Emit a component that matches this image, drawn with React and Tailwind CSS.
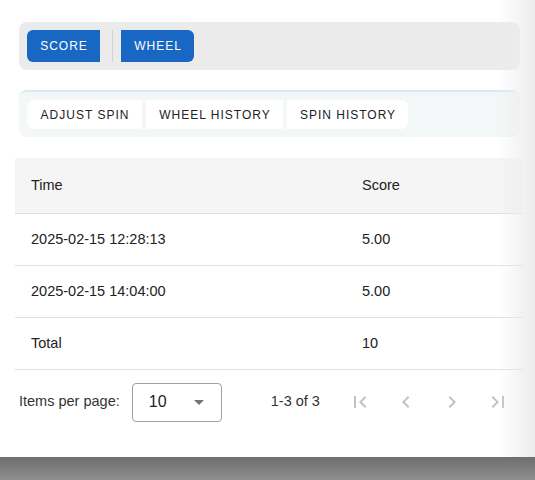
export default function App() {
  const font = "font-['Liberation_Sans',Arial,sans-serif]";
  const icon = "w-[24px] h-[24px] fill-[#c2c2c2]";
  return (
    <div className={`relative w-[535px] h-[480px] overflow-hidden flex flex-col bg-white ${font}`}>
      <div className="relative h-[457px] shrink-0 bg-white pt-[22px]">
        {/* top toggle bar */}
        <div className="ml-[19px] w-[501px] h-[48px] rounded-[8px] bg-[#ebebeb] pl-[8px] pt-[8px] flex items-start">
          <button className="h-[32px] w-[73px] rounded-l-[6px] bg-[#1867c3] text-white text-[12px] tracking-[1px] font-medium flex items-center justify-center pl-[1px]">
            SCORE
          </button>
          <div className="ml-[12px] h-[32px] w-px bg-[#d4d4d4]" />
          <button className="ml-[8px] h-[32px] w-[73px] rounded-r-[6px] bg-[#1867c3] text-white text-[12px] tracking-[1px] font-medium flex items-center justify-center pl-[1px]">
            WHEEL
          </button>
        </div>

        {/* sub tabs */}
        <div className="mt-[20px] ml-[19px] w-[501px] h-[47px] rounded-[8px] bg-[#f4f7f7] border-t-2 border-[#dde9f2] pl-[8px] pt-[8px] flex items-start gap-[4px]">
          <button className="h-[29px] w-[115px] rounded-l-[7px] bg-white text-[#222] text-[12px] tracking-[1px] flex items-center justify-center pl-[1px]">
            ADJUST SPIN
          </button>
          <button className="h-[29px] w-[137px] bg-white text-[#222] text-[12px] tracking-[1px] flex items-center justify-center pl-[1px]">
            WHEEL HISTORY
          </button>
          <button className="h-[29px] w-[121px] rounded-r-[7px] bg-white text-[#222] text-[12px] tracking-[1px] flex items-center justify-center pl-[1px]">
            SPIN HISTORY
          </button>
        </div>

        {/* table */}
        <div className="mt-[21px] ml-[15px] w-[508px] text-[14.5px] text-[#222]">
          <div className="flex h-[56px] items-center bg-[#f5f5f5] border-b border-[#e0e0e0]">
            <div className="w-[331px] pl-[16px]">Time</div>
            <div className="pl-[16px]">Score</div>
          </div>
          {[
            ["2025-02-15 12:28:13", "5.00"],
            ["2025-02-15 14:04:00", "5.00"],
            ["Total", "10"],
          ].map(([t, s]) => (
            <div key={t} className="flex h-[52px] items-center border-b border-[#e0e0e0]">
              <div className="w-[331px] pl-[16px]">{t}</div>
              <div className="pl-[16px]">{s}</div>
            </div>
          ))}
        </div>

        {/* paginator */}
        <div className="flex items-center h-[64px] pl-[19px] text-[14.5px] text-[#333]">
          <span>Items per page:</span>
          <div className="ml-[12px] w-[90px] h-[39px] rounded-[4px] border border-[#a0a0a0] flex items-center pl-[16px] pr-[17px] justify-between">
            <span className="text-[16px] text-[#222]">10</span>
            <svg viewBox="0 0 10 5" className="w-[10px] h-[5px] fill-[#757575]">
              <path d="M0 0l5 5 5-5z" />
            </svg>
          </div>
          <span className="ml-[49px]">1-3 of 3</span>
          <div className="ml-[20px] flex gap-[6px]">
            <div className="w-[40px] h-[40px] flex items-center justify-center">
              <svg viewBox="0 0 24 24" className={icon}>
                <path d="M18.41 16.59L13.82 12l4.59-4.59L17 6l-6 6 6 6zM6 6h2v12H6z" />
              </svg>
            </div>
            <div className="w-[40px] h-[40px] flex items-center justify-center">
              <svg viewBox="0 0 24 24" className={icon}>
                <path d="M15.41 7.41L14 6l-6 6 6 6 1.41-1.41L10.83 12z" />
              </svg>
            </div>
            <div className="w-[40px] h-[40px] flex items-center justify-center">
              <svg viewBox="0 0 24 24" className={icon}>
                <path d="M10 6L8.59 7.41 13.17 12l-4.58 4.59L10 18l6-6z" />
              </svg>
            </div>
            <div className="w-[40px] h-[40px] flex items-center justify-center">
              <svg viewBox="0 0 24 24" className={icon}>
                <path d="M5.59 7.41L10.18 12l-4.59 4.59L7 18l6-6-6-6zM16 6h2v12h-2z" />
              </svg>
            </div>
          </div>
        </div>

        {/* right edge shadow overlay */}
        <div className="pointer-events-none absolute top-0 right-0 bottom-0 w-[36px] bg-gradient-to-r from-[rgba(236,236,236,0)] to-[#ececec]" />
      </div>
      {/* backdrop below panel */}
      <div className="flex-1 bg-gradient-to-b from-[#6e6e6e] to-[#8e8e8e]" />
    </div>
  );
}
